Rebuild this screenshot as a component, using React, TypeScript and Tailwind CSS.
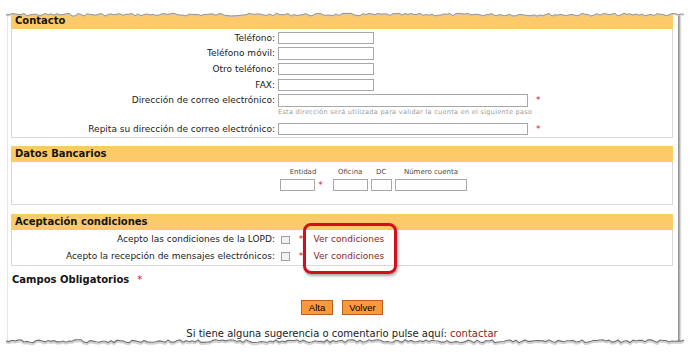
import React from 'react';

const font = "font-['DejaVu_Sans',Verdana,sans-serif]";

function jag(base: number, amp: number, seed: number, x0: number, x1: number) {
  let s = seed;
  const rnd = () => {
    s = (s * 9301 + 49297) % 233280;
    return s / 233280;
  };
  const pts: [number, number][] = [];
  for (let x = x0; x <= x1; x += 3) pts.push([x, base + (rnd() - 0.5) * amp * 2]);
  return pts;
}

const toStr = (pts: [number, number][]) => pts.map(([x, y]) => `${x},${y.toFixed(2)}`).join(' ');

function TornTop() {
  const pts = jag(14.6, 1.4, 7, 6, 684);
  return (
    <svg className="absolute left-0 top-0" width={690} height={24}>
      <polygon points={`0,0 690,0 690,${pts[pts.length - 1][1]} ${toStr([...pts].reverse())} 0,${pts[0][1]}`} fill="#fff" />
      <polyline points={toStr(pts.map(([x, y]) => [x, y + 0.8]))} fill="none" stroke="#c9c9c9" strokeWidth={1} />
      <polyline points={toStr(pts)} fill="none" stroke="#8f8f8f" strokeWidth={0.9} />
    </svg>
  );
}

function TornBottom() {
  const pts = jag(341.2, 1.5, 31, 6, 684);
  return (
    <svg className="absolute left-0 top-0" width={690} height={357}>
      <polygon points={`0,357 690,357 690,${pts[pts.length - 1][1]} ${toStr([...pts].reverse())} 0,${pts[0][1]}`} fill="#fff" />
      <polyline points={toStr(pts.map(([x, y]) => [x, y + 1.6]))} fill="none" stroke="#d2d2d2" strokeWidth={2} />
      <polyline points={toStr(pts)} fill="none" stroke="#6f6f6f" strokeWidth={1.1} />
    </svg>
  );
}

function Header({ title }: { title: string }) {
  return (
    <div className="h-[16px] bg-[#fdca69] pl-[4px] text-[10px] font-bold leading-[16px] text-[#141414]">{title}</div>
  );
}

function Star({ className = '' }: { className?: string }) {
  return <span className={`text-[#e0141e] ${className}`}>*</span>;
}

function Row({ label, wide, required, hint }: { label: string; wide?: boolean; required?: boolean; hint?: string }) {
  return (
    <div className="flex items-start">
      <div className="w-[266px] pr-[3px] text-right text-[9px] leading-[12.5px] text-[#1a1a1a]">{label}</div>
      <div className={`flex flex-col ${wide ? 'w-[250px]' : 'w-[96px]'}`}>
        <input className="h-[12.5px] w-full border border-[#a8a8a8] bg-white" />
        {hint && (
          <div className="h-[12.7px] whitespace-nowrap pt-[1px] text-[6.5px] leading-[9px] tracking-[0.3px] text-[#9a9a9a]">{hint}</div>
        )}
      </div>
      {required && <Star className="ml-[8px] text-[9px] leading-[12.5px]" />}
    </div>
  );
}

function BankCell({ label, width, star }: { label: string; width: string; star?: boolean }) {
  return (
    <div className="flex flex-col items-center">
      <div className="text-[7px] leading-[9px] text-[#4a4a4a]">{label}</div>
      <div className="mt-[2px] flex items-start">
        <input className={`h-[12.4px] border border-[#a8a8a8] bg-white ${width}`} />
        {star && <Star className="w-[11px] text-center text-[9px] leading-[12px]" />}
      </div>
    </div>
  );
}

function CheckRow({ label }: { label: string }) {
  return (
    <div className="flex h-[16.5px] items-center">
      <div className="w-[266px] pr-[3px] text-right text-[9px] text-[#1a1a1a]">{label}</div>
      <div className="ml-[2.7px] h-[8.5px] w-[9.5px] border border-[#a0a0a0] bg-[#f1f1f1]" />
      <Star className="ml-[8.5px] text-[9px]" />
      <a className="ml-[10.3px] text-[9px] text-[#8e2424]">Ver condiciones</a>
    </div>
  );
}

export default function App() {
  return (
    <div className={`relative h-[357px] w-[690px] overflow-hidden bg-white ${font}`}>
      <div className="ml-[7px] mt-[13px] h-[331px] w-[671px] border-l border-[#e6e6e6] bg-white pl-[3px] shadow-[2px_1px_2px_rgba(0,0,0,0.45)]">
        {/* Contacto */}
        <div className="w-[662px]">
          <Header title="Contacto" />
          <div className="flex flex-col gap-[3.15px] border-x border-b border-[#d9d9d9] pb-[1.5px] pt-[2.7px]">
            <Row label="Teléfono:" />
            <Row label="Teléfono móvil:" />
            <Row label="Otro teléfono:" />
            <Row label="FAX:" />
            <Row
              label="Dirección de correo electrónico:"
              wide
              required
              hint="Esta dirección será utilizada para validar la cuenta en el siguiente paso"
            />
            <Row label="Repita su dirección de correo electrónico:" wide required />
          </div>
        </div>

        {/* Datos Bancarios */}
        <div className="mt-[8.3px] w-[662px]">
          <Header title="Datos Bancarios" />
          <div className="border-x border-b border-[#d9d9d9] pb-[12.6px] pt-[6px]">
            <div className="ml-[268px] flex items-start">
              <BankCell label="Entidad" width="w-[35px]" star />
              <div className="ml-[6.7px]">
                <BankCell label="Oficina" width="w-[35px]" />
              </div>
              <div className="ml-[3px]">
                <BankCell label="DC" width="w-[21px]" />
              </div>
              <div className="ml-[3.3px]">
                <BankCell label="Número cuenta" width="w-[72px]" />
              </div>
            </div>
          </div>
        </div>

        {/* Aceptación condiciones */}
        <div className="mt-[9.5px] w-[662px]">
          <Header title="Aceptación condiciones" />
          <div className="border-x border-b border-[#d9d9d9] pt-[1.6px]">
            <CheckRow label="Acepto las condiciones de la LOPD:" />
            <CheckRow label="Acepto la recepción de mensajes electrónicos:" />
          </div>
        </div>

        <div className="mt-[8.5px] flex items-center pl-[1px] text-[10px] font-bold leading-[12px] text-[#141414]">
          Campos Obligatorios
          <Star className="ml-[8px] text-[10px] font-normal" />
        </div>

        <div className="mt-[14px] flex w-[662px] justify-center gap-[9.5px] font-['Liberation_Sans',Arial,sans-serif]">
          <button className="h-[15px] border border-[#b8611f] bg-[#fc9a3a] px-[6.5px] text-[9.5px] leading-[13px] text-black">Alta</button>
          <button className="h-[15px] border border-[#b8611f] bg-[#fc9a3a] px-[6px] text-[9.5px] leading-[13px] text-black">Volver</button>
        </div>

        <div className="mt-[12.5px] w-[662px] text-center text-[10px] leading-[12px] text-[#1a1a1a]">
          Si tiene alguna sugerencia o comentario pulse aquí: <a className="text-[#8e2424]">contactar</a>
        </div>
      </div>

      {/* annotation box */}
      <div className="absolute left-[303px] top-[223px] h-[51px] w-[94px] rounded-[8px] border-[3px] border-[#d10f1f] shadow-[1px_2px_3px_rgba(0,0,0,0.35)]" />

      <TornTop />
      <TornBottom />
    </div>
  );
}
